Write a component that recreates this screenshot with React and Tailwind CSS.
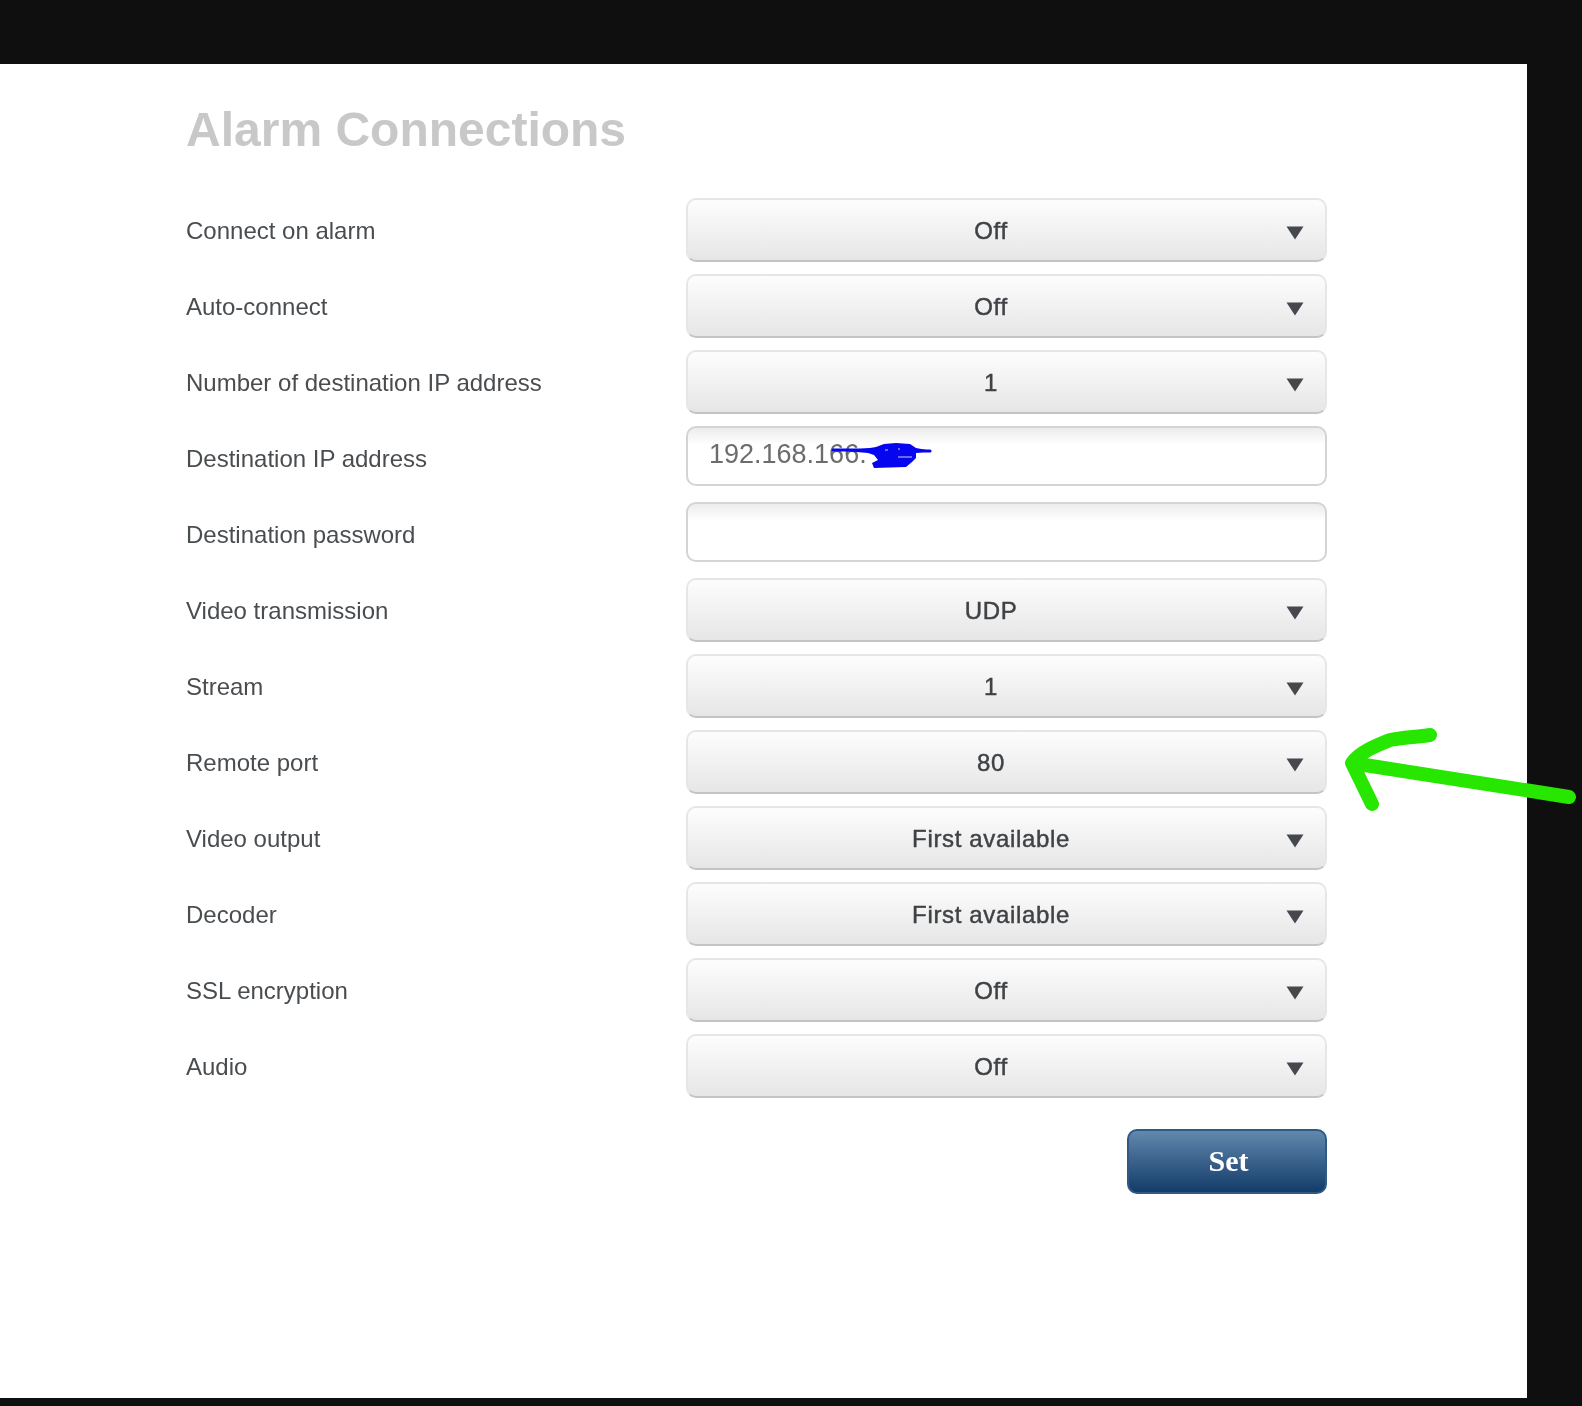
import React from 'react';

const rows = [
  { label: 'Connect on alarm', value: 'Off' },
  { label: 'Auto-connect', value: 'Off' },
  { label: 'Number of destination IP address', value: '1' },
  { label: 'Destination IP address', input: '192.168.166.' },
  { label: 'Destination password', input: '' },
  { label: 'Video transmission', value: 'UDP' },
  { label: 'Stream', value: '1' },
  { label: 'Remote port', value: '80' },
  { label: 'Video output', value: 'First available' },
  { label: 'Decoder', value: 'First available' },
  { label: 'SSL encryption', value: 'Off' },
  { label: 'Audio', value: 'Off' },
];

const SelectBox = ({ value }) => (
  <div className="relative flex h-[64px] w-full items-center justify-center rounded-[10px] border-2 border-[#e6e6e6] border-b-[#c4c4c4] bg-gradient-to-b from-[#fdfdfd] to-[#e6e6e6] pr-[31px] text-[24px] tracking-[0.65px] text-[#3f4245] [-webkit-text-stroke:0.45px_#3f4245]">
    <span className="pt-[1px] blur-[0.5px]">{value}</span>
    <svg className="absolute right-[21px] top-[26px]" width="18" height="14" viewBox="0 0 18 14">
      <path d="M0.5 0.5 H17.5 L9 13.5 Z" fill="#45484c" />
    </svg>
  </div>
);

const TextBox = ({ value }) => (
  <div className="relative h-[60px] w-full">
    <input
      readOnly
      value={value}
      className="h-full w-full rounded-[10px] border-2 border-[#d4d4d4] bg-gradient-to-b from-[#ececec] via-white via-[30%] to-white pl-[21px] pb-[3px] text-[27px] text-[#6c6c6c] blur-[0.4px] outline-none"
    />
    {value && (
      <svg className="absolute left-[140px] top-[12px]" width="110" height="34" viewBox="0 0 110 34">
        <path d="M8 12 C28 12 38 11 50 9 L58 6 L70 5 L84 6 L90 10 L106 13 L90 15 L90 20 L86 24 L80 29 L48 30 L46 25 L52 22 L48 17 L42 15 Z" fill="#0505f0" />
        <path d="M7 12 H50 M84 13 H104" stroke="#0505f0" strokeWidth="3" strokeLinecap="round" />
        <path d="M59 12 h3 M72 11 h2 M72 19 h14" stroke="#8a8ae8" strokeWidth="1.5" />
      </svg>
    )}
  </div>
);

export default function App() {
  return (
    <div className="relative h-[1406px] w-[1582px] overflow-hidden bg-[#0f0f0f] pt-[64px] pb-[8px] pr-[55px] font-['Liberation_Sans',Arial,sans-serif]">
      <div className="h-full bg-white pl-[186px] pr-[200px] pt-[38px]">
        <h1 className="text-[48px] font-bold leading-[56px] text-[#c8c8c8] blur-[0.5px]">Alarm Connections</h1>
        <div className="mt-[40px] flex flex-col">
          {rows.map((row) => (
            <div key={row.label} className="flex h-[76px] items-start">
              <label className="flex h-[64px] w-[500px] shrink-0 items-center pt-[1px] text-[24px] text-[#4a4d50] blur-[0.4px]">{row.label}</label>
              {row.input !== undefined ? <TextBox value={row.input} /> : <SelectBox value={row.value} />}
            </div>
          ))}
        </div>
        <div className="mt-[19px] flex justify-end">
          <button className="h-[65px] w-[200px] rounded-[10px] border-2 border-[#2f5a85] bg-gradient-to-b from-[#6288ad] to-[#123c69] pb-[3px] pl-[3px] font-['Liberation_Serif',serif] text-[30px] font-bold text-white">
            <span className="blur-[0.5px]">Set</span>
          </button>
        </div>
      </div>

      <svg className="absolute left-[1330px] top-[715px]" width="252" height="105" viewBox="0 0 252 105">
        <path
          d="M100 20 C85 22 70 23 60 25 C45 31 30 37 22 48 L239 82 M22 48 L42 89"
          fill="none"
          stroke="#27e600"
          strokeWidth="14"
          strokeLinecap="round"
          strokeLinejoin="round"
        />
      </svg>
    </div>
  );
}
